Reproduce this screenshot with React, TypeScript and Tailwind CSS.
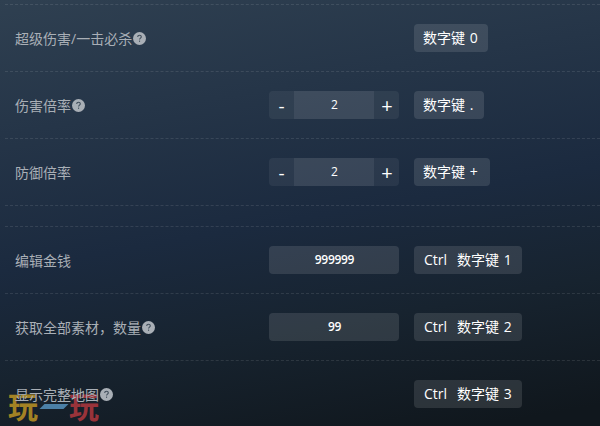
import React from "react";

const HelpIcon = () => (
  <svg className="ml-px h-[13px] w-[13px] shrink-0 -translate-y-px" viewBox="0 0 13 13">
    <circle cx="6.5" cy="6.5" r="6.5" fill="#a9afb6" />
    <path d="M4.7 4.9c0-1.1.7-1.7 1.8-1.7s1.8.6 1.8 1.5c0 1.3-1.7 1.4-1.7 2.7" fill="none" stroke="#3f4c59" strokeWidth="1.1" />
    <rect x="6" y="8.6" width="1.1" height="1.2" fill="#3f4c59" />
  </svg>
);

const Stepper = ({ value }: { value: string }) => (
  <div className="flex h-7 w-[130px] overflow-hidden rounded-[4px] text-white">
    <button className="flex w-[25px] items-center justify-center bg-white/[0.06] pt-[2px] text-[19px] leading-none">-</button>
    <span className="w-20 bg-white/[0.12] pl-px text-center text-[12px] font-medium leading-[27px]">{value}</span>
    <button className="flex w-[25px] items-center justify-center bg-white/[0.06] pl-px pt-[2px] text-[20px] leading-none">+</button>
  </div>
);

const NumberBox = ({ value }: { value: string }) => (
  <div className="h-7 w-[130px] rounded-[4px] bg-white/[0.115] pl-px text-center text-[12px] font-semibold leading-[27px] tracking-[-0.3px] text-white">{value}</div>
);

type RowProps = {
  label: string;
  help?: boolean;
  control?: React.ReactNode;
  ctrl?: boolean;
  hotkey: string;
  width: string;
};

const Row = ({ label, help, control, ctrl, hotkey, width }: RowProps) => (
  <div className="flex h-[67px] items-center border-b border-dashed border-white/[0.1] pl-[10px]">
    <div className="flex w-[254px] items-center whitespace-nowrap pt-[2px] text-[14px] leading-5 text-[#a9afb6]">
      <span>{label}</span>
      {help && <HelpIcon />}
    </div>
    <div className="w-[145px]">{control}</div>
    <div className={`flex h-7 items-center gap-[10px] whitespace-nowrap rounded-[4px] bg-white/[0.115] text-[14px] leading-7 text-white [word-spacing:1px] ${ctrl ? "pl-[10px]" : "pl-[9px]"} ${width}`}>
      {ctrl && <span>Ctrl</span>}
      <span>{hotkey}</span>
    </div>
  </div>
);

const Watermark = () => (
  <div className="absolute left-[8px] top-[384px] h-[42px] w-[94px] whitespace-nowrap font-['Noto_Sans_CJK_SC',sans-serif] text-[30px] font-bold leading-[42px] opacity-70">
    <span className="absolute left-0 top-0 text-[#dfac22]">玩</span>
    <span className="absolute left-[34px] top-[20px] h-[5px] w-[24px] -skew-x-[45deg] bg-[#62a9dc]" />
    <span className="absolute left-[61px] top-0 text-[#d23c42]">玩</span>
  </div>
);

export default function App() {
  return (
    <main className="relative h-[426px] w-[600px] overflow-hidden bg-[linear-gradient(170deg,#2f4051_0%,#1b2a3f_51%,#17232f_72%,#10171d_96%)] font-['Open_Sans','Noto_Sans_CJK_SC',sans-serif]">
      <Watermark />
      <div className="relative ml-[5px] flex flex-col">
        <div className="h-[5px] border-b border-dashed border-white/[0.1]" />
        <Row label="超级伤害/一击必杀" help hotkey="数字键 0" width="w-[74px]" />
        <Row label="伤害倍率" help control={<Stepper value="2" />} hotkey="数字键 ." width="w-[70px]" />
        <Row label="防御倍率" control={<Stepper value="2" />} hotkey="数字键 +" width="w-[76px]" />
        <div className="h-[21px] border-b border-dashed border-white/[0.1]" />
        <Row label="编辑金钱" control={<NumberBox value="999999" />} ctrl hotkey="数字键 1" width="w-[108px]" />
        <Row label="获取全部素材，数量" help control={<NumberBox value="99" />} ctrl hotkey="数字键 2" width="w-[108px]" />
        <Row label="显示完整地图" help ctrl hotkey="数字键 3" width="w-[108px]" />
      </div>
    </main>
  );
}
